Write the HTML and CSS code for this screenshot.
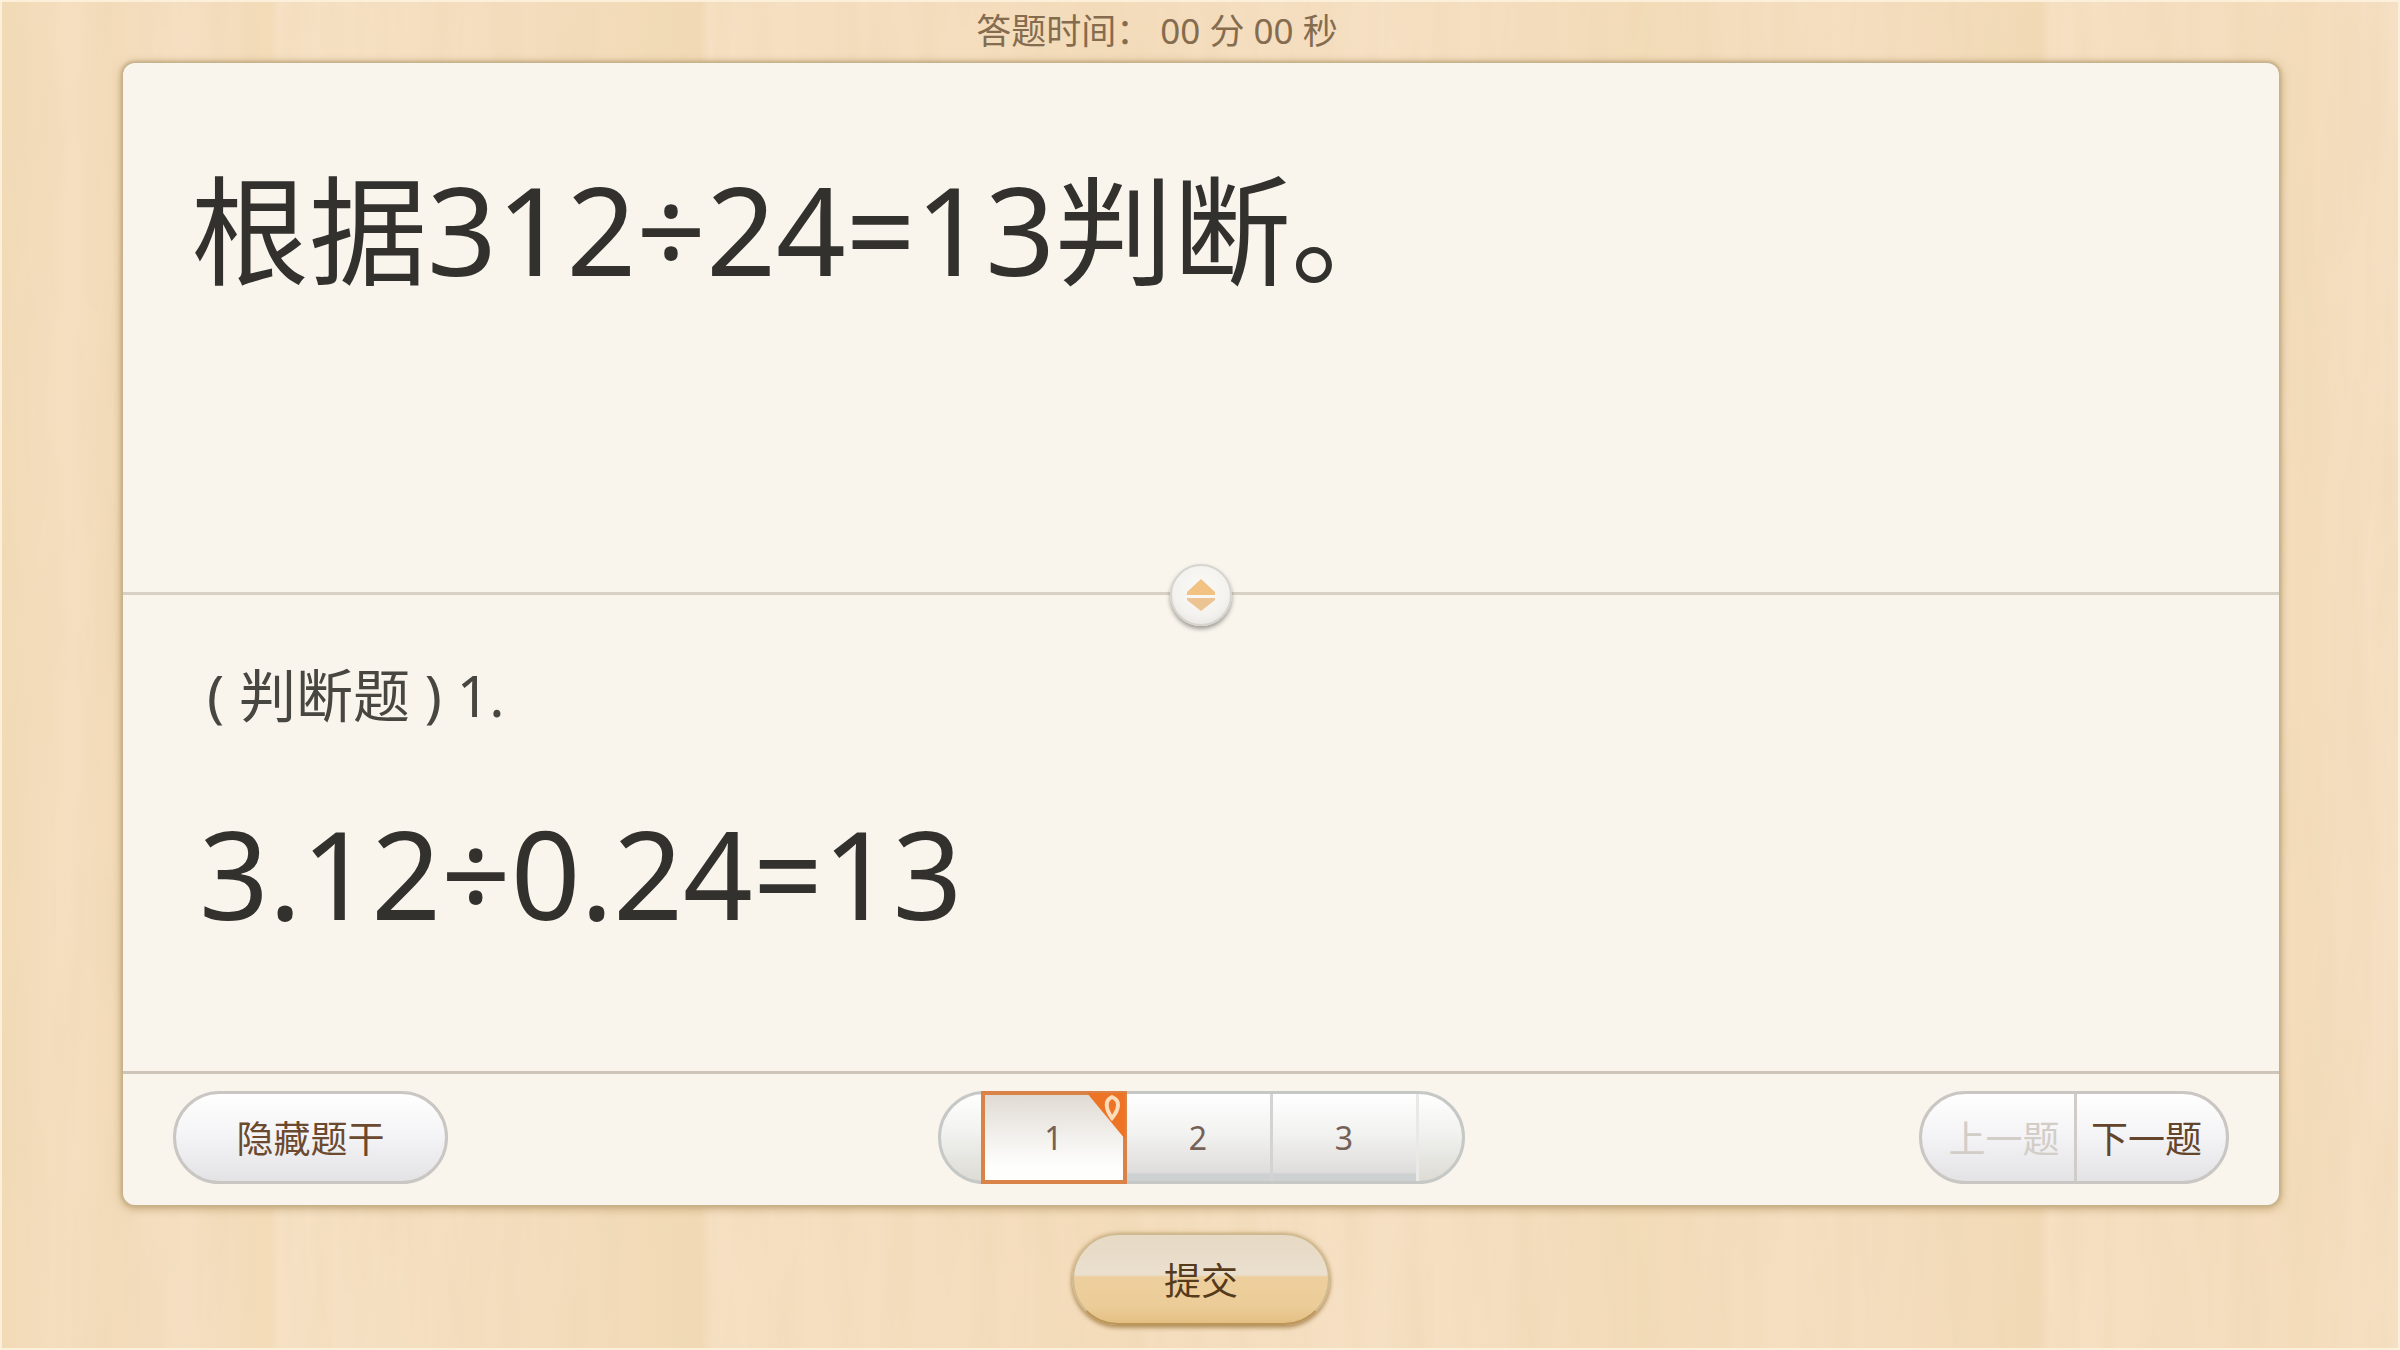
FILE: index.html
```html
<!DOCTYPE html>
<html lang="zh-CN">
<head>
    <meta charset="UTF-8">
    <meta name="viewport" content="width=device-width, initial-scale=1.0">
    <title>答题</title>
    <link rel="stylesheet" href="styles.css">
</head>
<body>
    <header class="timer">答题时间： 00 分 00 秒</header>

    <main class="panel">
        <!-- 题干 -->
        <section class="stem">
            <h1 class="stem-text">根据<span class="formula">312÷24=13</span>判断。</h1>
            <button type="button" class="drag-handle" aria-label="调整高度">
                <svg width="30" height="32" viewBox="0 0 30 32">
                    <path d="M15 0 L29 13 L29 16 L1 16 L1 13 Z" fill="#f2c283"/>
                    <path d="M1 19 L29 19 L29 21 L15 32 L1 21 Z" fill="#ecc392"/>
                </svg>
            </button>
        </section>

        <!-- 小题 -->
        <section class="question">
            <h2 class="question-type">( 判断题 ) 1.</h2>
            <p class="question-text formula">3.12÷0.24=13</p>
        </section>

        <!-- 底部工具栏 -->
        <footer class="toolbar">
            <div class="toolbar-left">
                <button type="button" class="pill">隐藏题干</button>
            </div>
            <nav class="pager">
                <button type="button" class="page active">
                    1
                    <svg class="page-mark" width="38" height="46" viewBox="0 0 38 46">
                        <path d="M0 0 H38 V46 Z" fill="#ed7325"/>
                        <path d="M25 4 C18 7 18 15 25 25 C33 15 33 7 25 4 Z" fill="none" stroke="#fbdcbb" stroke-width="4"/>
                    </svg>
                </button>
                <button type="button" class="page">2</button>
                <button type="button" class="page">3</button>
            </nav>
            <div class="toolbar-right">
                <div class="switcher">
                    <button type="button" class="switch" disabled>上一题</button>
                    <button type="button" class="switch">下一题</button>
                </div>
            </div>
        </footer>
    </main>

    <div class="submit-bar">
        <button type="button" class="submit">提交</button>
    </div>
</body>
</html>
```

FILE: styles.css
```css
* {
    box-sizing: border-box;
}
body {
    margin: 0;
    min-height: 100vh;
    display: flex;
    flex-direction: column;
    font-family: "Noto Sans", "Noto Sans CJK SC", sans-serif;
    color: #33312d;
    background-color: #f4ddbb;
    /* wood grain over a few wide planks */
    background-image:
        url("data:image/svg+xml,%3Csvg xmlns='http://www.w3.org/2000/svg' width='2400' height='1350'%3E%3Cfilter id='g' x='0' y='0' width='100%25' height='100%25'%3E%3CfeTurbulence type='fractalNoise' baseFrequency='0.035 0.004' numOctaves='3' seed='8'/%3E%3CfeColorMatrix values='0 0 0 0 0.86 0 0 0 0 0.69 0 0 0 0 0.46 1.2 0 0 0 -0.46'/%3E%3C/filter%3E%3Crect width='2400' height='1350' filter='url(%23g)'/%3E%3C/svg%3E"),
        linear-gradient(90deg, #f2dab6 0, #f5dfc0 70px, #f3dbb9 110px, #f5dfc2 180px, #f3dbb8 270px, #f6e1c5 280px, #f4ddbd 540px, #f2d9b5 700px, #f6e0c3 710px, #f4dcbb 1100px, #f6e0c4 1390px, #f3dbb8 1640px, #f5dfc1 1800px, #f2d9b6 2040px, #f6e0c3 2050px, #f4dcbb 2310px, #f6e0c5 2400px);
    background-size: 100% 100%;
    box-shadow: inset 0 0 0 2px #fcf0db;
}
button {
    margin: 0;
    padding: 0;
    font-family: inherit;
    cursor: pointer;
}
.timer {
    height: 63px;
    padding-right: 86px;
    line-height: 62px;
    font-size: 35px;
    text-align: center;
    color: #856c4f;
}
.panel {
    flex: 1;
    display: grid;
    grid-template-rows: 531fr 476fr auto;
    margin: 0 121px 0 123px;
    border-radius: 12px;
    background: #f9f5ed;
    box-shadow: 0 0 3px 2px #c5b189, 0 2px 8px 2px rgba(160, 125, 65, 0.5);
}

/* 题干 */
.stem {
    position: relative;
    padding: 80px 68px 0;
    border-bottom: 3px solid #d6d0c5;
}
.stem-text {
    margin: 0;
    font-size: 118px;
    line-height: 172px;
    font-weight: 400;
}
.formula {
    font-size: 122px;
}
.drag-handle {
    position: absolute;
    left: 50%;
    bottom: -34px;
    width: 62px;
    height: 62px;
    transform: translateX(-50%);
    display: flex;
    align-items: center;
    justify-content: center;
    border: 2px solid #d5d4cf;
    border-radius: 50%;
    background: radial-gradient(circle at 50% 40%, #fbfaf7 0, #f3f2ee 60%, #deddd9 100%);
    box-shadow: 0 3px 4px rgba(90, 85, 75, 0.55);
}

/* 小题 */
.question {
    padding: 52px 76px 0;
}
.question-type {
    margin: 0;
    padding-left: 8px;
    font-size: 57px;
    line-height: 96px;
    font-weight: 400;
    color: #484641;
}
.question-text {
    margin: 44px 0 0;
    line-height: 172px;
}

/* 底部工具栏 */
.toolbar {
    display: grid;
    grid-template-columns: 1fr auto 1fr;
    align-items: start;
    height: 134px;
    padding: 17px 50px 0;
    border-top: 3px solid #cec5b8;
}
.toolbar-right {
    display: flex;
    justify-content: flex-end;
}
.pill,
.switcher {
    height: 93px;
    border: 3px solid #c9c6c3;
    border-radius: 47px;
    background: linear-gradient(#ffffff, #f5f4f6 45%, #e3e3e6);
}
.pill {
    width: 275px;
    font-size: 37px;
    color: #6b4a2f;
}
.switcher {
    display: flex;
    width: 310px;
    overflow: hidden;
}
.switch {
    width: 50%;
    border: 0;
    background: none;
    font-size: 37px;
    color: #64452c;
}
.switch:disabled {
    padding-left: 12px;
    color: #d3cdc8;
    cursor: default;
}
.switch + .switch {
    padding-right: 10px;
    border-left: 3px solid #cfccca;
}

/* 题号 */
.pager {
    display: flex;
    height: 93px;
    padding: 0 43px 0 40px;
    border: 3px solid #c6c8c6;
    border-radius: 47px;
    background: linear-gradient(#ffffff, #f1f1ef 45%, #dcdbd4);
}
.page {
    position: relative;
    width: 146px;
    border: 0;
    border-right: 3px solid #d2d3d2;
    background: linear-gradient(#ffffff, #f2f2f1 45%, #dedddb 90%, #cdd1d2 92%);
    font-size: 32px;
    color: #756156;
}
.page:last-child {
    border-right-color: #e9e9e7;
}
.page.active {
    margin: -3px 0;
    border: 4px solid #d98349;
    background: linear-gradient(#e0dad3, #f3f1ed 50%, #fefefd 85%);
}
.page-mark {
    position: absolute;
    top: -2px;
    right: -2px;
}

/* 提交 */
.submit-bar {
    display: flex;
    justify-content: center;
    height: 145px;
    margin: 0 121px 0 123px;
    padding-top: 28px;
}
.submit {
    width: 258px;
    height: 92px;
    border: 2px solid #cfb98f;
    border-bottom-color: #bc9659;
    border-radius: 46px;
    background: linear-gradient(#e6dac5, #ebdfce 45%, #edcf9e 48%, #eccd98 80%, #e3bf83);
    box-shadow: 0 3px 4px rgba(150, 110, 50, 0.6), 0 0 4px rgba(170, 130, 70, 0.5);
    font-size: 37px;
    color: #563a1c;
}
```
